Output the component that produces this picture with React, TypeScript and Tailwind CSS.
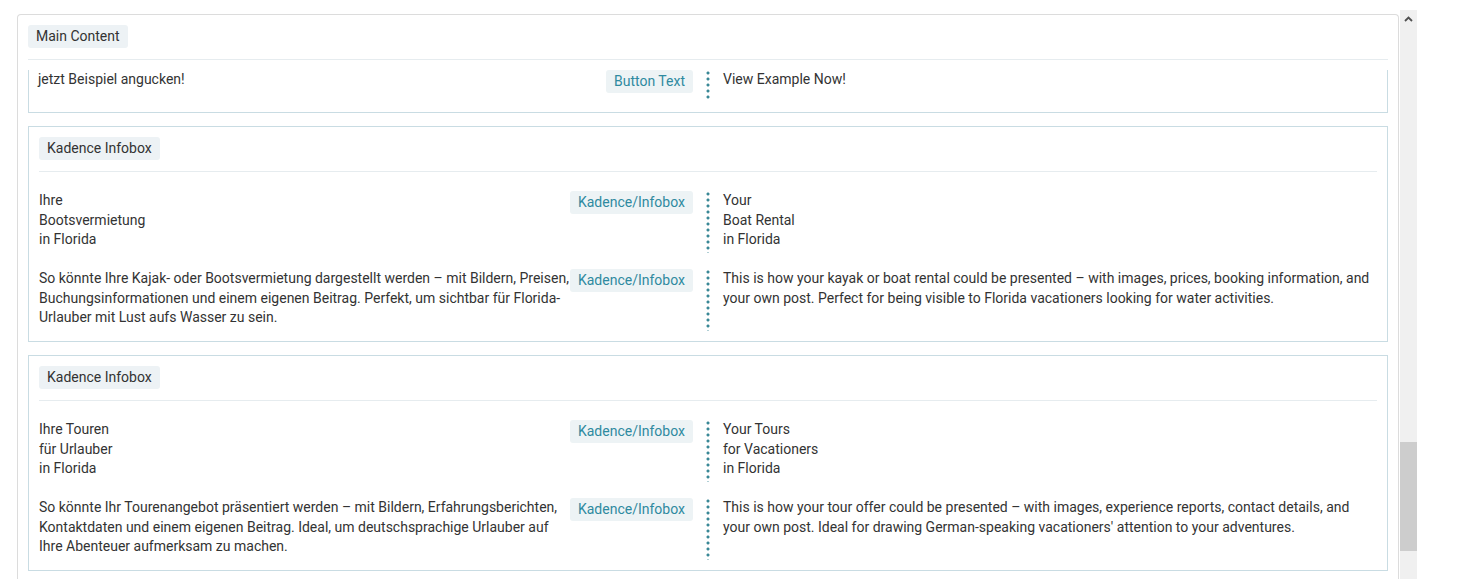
import React from "react";

type Row = { de: string[]; en: string[]; tag: string };

const BOXES: { title: string; rows: Row[] }[] = [
  {
    title: "Kadence Infobox",
    rows: [
      {
        de: ["Ihre", "Bootsvermietung", "in Florida"],
        en: ["Your", "Boat Rental", "in Florida"],
        tag: "Kadence/Infobox",
      },
      {
        de: [
          "So könnte Ihre Kajak- oder Bootsvermietung dargestellt werden – mit Bildern, Preisen, Buchungsinformationen und einem eigenen Beitrag. Perfekt, um sichtbar für Florida-Urlauber mit Lust aufs Wasser zu sein.",
        ],
        en: [
          "This is how your kayak or boat rental could be presented – with images, prices, booking information, and your own post. Perfect for being visible to Florida vacationers looking for water activities.",
        ],
        tag: "Kadence/Infobox",
      },
    ],
  },
  {
    title: "Kadence Infobox",
    rows: [
      {
        de: ["Ihre Touren", "für Urlauber", "in Florida"],
        en: ["Your Tours", "for Vacationers", "in Florida"],
        tag: "Kadence/Infobox",
      },
      {
        de: [
          "So könnte Ihr Tourenangebot präsentiert werden – mit Bildern, Erfahrungsberichten, Kontaktdaten und einem eigenen Beitrag. Ideal, um deutschsprachige Urlauber auf Ihre Abenteuer aufmerksam zu machen.",
        ],
        en: [
          "This is how your tour offer could be presented – with images, experience reports, contact details, and your own post. Ideal for drawing German-speaking vacationers' attention to your adventures.",
        ],
        tag: "Kadence/Infobox",
      },
    ],
  },
];

function Lines({ lines }: { lines: string[] }) {
  return (
    <div>
      {lines.map((l, i) => (
        <div key={i}>{l}</div>
      ))}
    </div>
  );
}

function Tag({ children }: { children: React.ReactNode }) {
  return (
    <span className="shrink-0 self-start rounded-[3px] bg-[#edf3f5] px-2 h-[23px] leading-[23px] text-[#2f8aa0]">
      {children}
    </span>
  );
}

function TransRow({ row, minH }: { row: Row; minH?: string }) {
  return (
    <div className={`grid grid-cols-[1fr_30px_1fr] ${minH ?? ""}`}>
      <div className="flex items-start">
        <div className="flex-1 pr-px">
          <Lines lines={row.de} />
        </div>
        <Tag>{row.tag}</Tag>
      </div>
      <div className="flex justify-center">
        {/* round dots, like the dotted divider in the editor */}
        <div className="w-[4px] bg-[radial-gradient(circle,#3a8896_1.4px,transparent_1.7px)] bg-[length:4px_6px] bg-repeat-y" />
      </div>
      <div>
        <Lines lines={row.en} />
      </div>
    </div>
  );
}

export default function App() {
  return (
    <div
      className="relative h-[579px] w-[1465px] overflow-hidden bg-white text-[14px] leading-[19.6px] text-[#333]"
      style={{ fontFamily: "Roboto, 'Liberation Sans', sans-serif" }}
    >
      <div className="flex h-full">
        {/* outer panel */}
        <div className="ml-[17px] mt-[14px] w-[1382px] rounded-t-[4px] border border-b-0 border-[#dcdcdc] px-[10px] pt-[10px]">
          <div className="flex">
            <span className="rounded-[3px] bg-[#edf2f5] px-2 h-[23px] leading-[23px]">Main Content</span>
          </div>
          <div className="mt-[11px] border-t border-[#e6ecef]" />

          <div className="mt-[10px] flex flex-col gap-[13px]">
            {/* first box, scrolled so its top is hidden */}
            <div className="border border-t-0 border-[#c9dce3] px-[9px] pb-[12px]">
              <TransRow
                row={{ de: ["jetzt Beispiel angucken!"], en: ["View Example Now!"], tag: "Button Text" }}
                minH="min-h-[30px]"
              />
            </div>

            {BOXES.map((b, i) => (
              <div key={i} className="border border-[#c9dce3] px-[10px] pt-[10px] pb-[10px]">
                <div className="flex">
                  <span className="rounded-[3px] bg-[#edf2f5] px-2 h-[23px] leading-[23px]">{b.title}</span>
                </div>
                <div className="mt-[11px] border-t border-[#e6ecef]" />
                <div className="flex flex-col gap-[16px] pt-[19px]">
                  {b.rows.map((r, j) => (
                    <TransRow key={j} row={r} minH="min-h-[62px]" />
                  ))}
                </div>
              </div>
            ))}
          </div>
        </div>

        {/* scrollbar */}
        <div className="ml-px mt-[10px] flex w-[17px] flex-col bg-[#f0f0f0]">
          <div className="flex h-[17px] items-center justify-center">
            <svg width="9" height="6" viewBox="0 0 9 6">
              <path d="M1 5 L4.5 1.5 L8 5" fill="none" stroke="#505050" strokeWidth="1.8" />
            </svg>
          </div>
          <div className="mt-[415px] h-[109px] bg-[#cdcdcd]" />
        </div>
      </div>
    </div>
  );
}
